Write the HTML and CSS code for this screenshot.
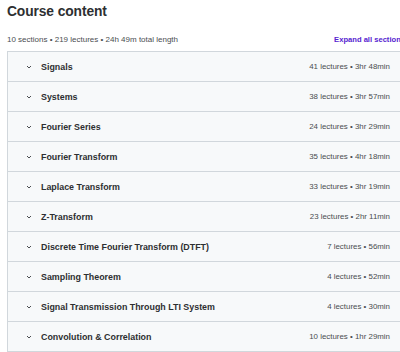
FILE: index.html
```html
<!DOCTYPE html>
<html lang="en">
<head>
    <meta charset="UTF-8">
    <title>Course content</title>
    <link rel="stylesheet" href="styles.css">
</head>
<body>

<div class="curriculum">
    <h2>Course content</h2>
    <div class="summary">
        <span>10 sections • 219 lectures • 24h 49m total length</span>
        <a class="expand" href="#">Expand all sections</a>
    </div>
    <div class="sections" id="sections">
        <!-- filled by script -->
    </div>
</div>

<script>
    const sections = [
        { title: "Signals", lectures: 41, length: "3hr 48min" },
        { title: "Systems", lectures: 38, length: "3hr 57min" },
        { title: "Fourier Series", lectures: 24, length: "3hr 29min" },
        { title: "Fourier Transform", lectures: 35, length: "4hr 18min" },
        { title: "Laplace Transform", lectures: 33, length: "3hr 19min" },
        { title: "Z-Transform", lectures: 23, length: "2hr 11min" },
        { title: "Discrete Time Fourier Transform (DTFT)", lectures: 7, length: "56min" },
        { title: "Sampling Theorem", lectures: 4, length: "52min" },
        { title: "Signal Transmission Through LTI System", lectures: 4, length: "30min" },
        { title: "Convolution & Correlation", lectures: 10, length: "1hr 29min" }
    ];

    const list = document.getElementById('sections');
    sections.forEach(s => {
        const row = document.createElement('div');
        row.className = 'section';
        row.innerHTML = `
            <svg class="chevron" width="6" height="6" viewBox="0 0 6 6">
                <path d="M1 2 L3 4 L5 2" fill="none" stroke="#4a4d50" stroke-width="1"/>
            </svg>
            <span class="title"></span>
            <span class="meta">${s.lectures} lectures • ${s.length}</span>
        `;
        row.querySelector('.title').textContent = s.title;
        list.appendChild(row);
    });
</script>

</body>
</html>
```

FILE: styles.css
```css
html, body {
    margin: 0;
    padding: 0;
    overflow: hidden;
}
body {
    font-family: "Liberation Sans", Arial, sans-serif;
    color: #2d2f31;
    background-color: #fff;
}
.curriculum {
    width: 398px;
    padding: 3px 0 0 7px;
}
h2 {
    margin: 0;
    font-size: 13.8px;
    line-height: 18px;
    font-weight: bold;
    letter-spacing: -0.1px;
}
.summary {
    display: flex;
    justify-content: space-between;
    align-items: center;
    height: 14px;
    margin: 11px 0 5px;
    font-size: 8px;
    color: #4a4d50;
}
.expand {
    color: #5624d0;
    font-weight: bold;
    font-size: 7.6px;
    text-decoration: none;
}
.sections {
    border: 1px solid #d1d7dc;
    border-right: none;
}
.section {
    display: flex;
    align-items: center;
    height: 29px;
    padding: 0 15px 0 18px;
    background-color: #f7f9fa;
    border-bottom: 1px solid #d1d7dc;
}
.section:last-child {
    border-bottom: none;
}
.chevron {
    margin-right: 9px;
}
.title {
    flex: 1;
    font-size: 8.9px;
    font-weight: bold;
    color: #2d2f31;
}
.meta {
    font-size: 7.9px;
    color: #4a4d50;
}
```
